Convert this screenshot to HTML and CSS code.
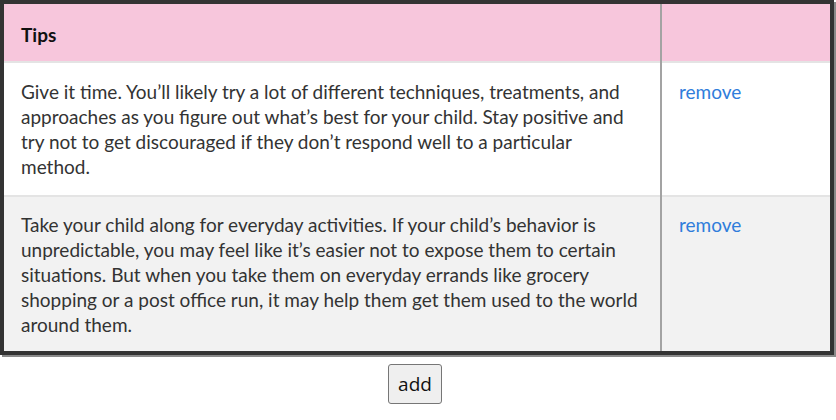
FILE: index.html
```html
<!DOCTYPE html>
<html>
<head>
<meta charset="utf-8">
<link rel="stylesheet" href="styles.css">
</head>
<body>
<table class="tips">
  <thead>
    <tr>
      <th class="tip-col">Tips</th>
      <th class="act-col"></th>
    </tr>
  </thead>
  <tbody>
    <tr class="row-odd">
      <td class="tip-col">Give it time. You’ll likely try a lot of different techniques, treatments, and approaches as you figure out what’s best for your child. Stay positive and try not to get discouraged if they don’t respond well to a particular method.</td>
      <td class="act-col"><a class="remove" href="#">remove</a></td>
    </tr>
    <tr class="row-even">
      <td class="tip-col">Take your child along for everyday activities. If your child’s behavior is unpredictable, you may feel like it’s easier not to expose them to certain situations. But when you take them on everyday errands like grocery shopping or a post office run, it may help them get them used to the world around them.</td>
      <td class="act-col"><a class="remove" href="#">remove</a></td>
    </tr>
  </tbody>
</table>
<div class="actions">
  <button class="add-btn" type="button">add</button>
</div>
</body>
</html>
```
FILE: styles.css
```css
html, body {
  margin: 0;
  padding: 0;
  background: #ffffff;
}
body {
  font-family: Lato, "Noto Sans", sans-serif;
  font-size: 19px;
  line-height: 25px;
  color: #333333;
}
.tips {
  width: 834px;
  border-collapse: collapse;
  border: 4px solid #333333;
  box-shadow: 2px 2px 0 #8a8a8a;
}
.tips th,
.tips td {
  padding: 16px 16px 16px 17px;
  text-align: left;
  vertical-align: top;
}
.tips th {
  background: #f7c6dc;
  color: #111111;
  font-weight: 700;
  height: 25px;
  padding-top: 18px;
  padding-bottom: 14px;
}
.tips .tip-col {
  border-left: 1px solid #999999;
}
.tips .act-col {
  width: 135px;
  border-left: 2px solid #a3a3a3;
}
.tips tbody tr {
  border-top: 2px solid #e4e4e4;
}
.row-odd td {
  background: #ffffff;
  padding-top: 16px;
  padding-bottom: 16px;
}
.row-even td {
  background: #f2f2f2;
  padding-top: 15px;
  padding-bottom: 14px;
}
.remove {
  color: #2f7ddb;
  text-decoration: none;
}
.actions {
  display: flex;
  justify-content: center;
  padding: 9px 0 0 0;
}
.add-btn {
  font-family: "Open Sans", Lato, sans-serif;
  font-size: 19px;
  color: #111111;
  background: #efefef;
  border: 1px solid #767676;
  border-radius: 3px;
  padding: 6px 9px;
  margin-right: 6px;
}
```
